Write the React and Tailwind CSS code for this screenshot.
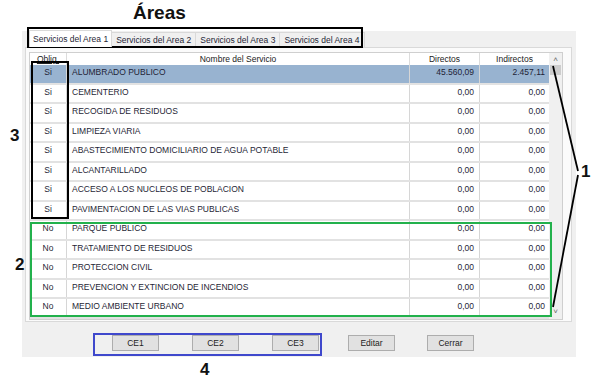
import React from "react";

const ROWS = [
  { ob: "Si", name: "ALUMBRADO PUBLICO", d: "45.560,09", i: "2.457,11", sel: true },
  { ob: "Si", name: "CEMENTERIO", d: "0,00", i: "0,00" },
  { ob: "Si", name: "RECOGIDA DE RESIDUOS", d: "0,00", i: "0,00" },
  { ob: "Si", name: "LIMPIEZA VIARIA", d: "0,00", i: "0,00" },
  { ob: "Si", name: "ABASTECIMIENTO DOMICILIARIO DE AGUA POTABLE", d: "0,00", i: "0,00" },
  { ob: "Si", name: "ALCANTARILLADO", d: "0,00", i: "0,00" },
  { ob: "Si", name: "ACCESO A LOS NUCLEOS DE POBLACION", d: "0,00", i: "0,00" },
  { ob: "Si", name: "PAVIMENTACION DE LAS VIAS PUBLICAS", d: "0,00", i: "0,00" },
  { ob: "No", name: "PARQUE PUBLICO", d: "0,00", i: "0,00" },
  { ob: "No", name: "TRATAMIENTO DE RESIDUOS", d: "0,00", i: "0,00" },
  { ob: "No", name: "PROTECCION CIVIL", d: "0,00", i: "0,00" },
  { ob: "No", name: "PREVENCION Y EXTINCION DE INCENDIOS", d: "0,00", i: "0,00" },
  { ob: "No", name: "MEDIO AMBIENTE URBANO", d: "0,00", i: "0,00" },
];

const TABS = ["Servicios del Area 1", "Servicios del Area 2", "Servicios del Area 3", "Servicios del Area 4"];

const Btn = ({ children }) => (
  <div className="w-[47px] h-[16px] flex items-center justify-center bg-[#e1e1e1] border border-[#adadad] text-[8.5px] text-[#222]">
    {children}
  </div>
);

export default function App() {
  return (
    <div className="relative w-[594px] h-[382px] bg-white overflow-hidden text-[#1f1f36]" style={{ fontFamily: "'Liberation Sans', Arial, sans-serif" }}>
      <div className="h-[31px] pl-[133px] pt-[1px] text-[19px] font-bold text-[#111] leading-[24px]">Áreas</div>

      <div className="ml-[22px] w-[554px] h-[326px] bg-[#f0f0f0] flex flex-col">
        {/* tabs */}
        <div className="flex pl-[7px] h-[16px] items-end">
          {TABS.map((t, k) => (
            <div
              key={t}
              className={
                k === 0
                  ? "h-[17px] -mt-[1px] px-[3px] flex items-center bg-white border border-b-0 border-[#d9d9d9] text-[8.5px] z-10"
                  : "h-[15px] px-[4px] flex items-center bg-[#f0f0f0] border-r border-t border-[#d9d9d9] text-[8.5px]"
              }
            >
              {t}
            </div>
          ))}
        </div>

        {/* tab page */}
        <div className="ml-[3px] w-[547px] h-[275px] shrink-0 bg-[#fbfbfb] border border-[#d9d9d9] pl-[3px] pt-[4px]">
          <div className="w-[534px] h-[268px] bg-white border border-[#cfcfcf] flex">
            <div className="flex-1 flex flex-col text-[8.5px]">
              <div className="h-[12px] flex text-[#222] leading-[12px]">
                <div className="w-[37px] text-center border-r border-[#dcdcdc] underline">Oblig.</div>
                <div className="w-[343px] text-center border-r border-[#dcdcdc]">Nombre del Servicio</div>
                <div className="w-[70px] text-center border-r border-[#dcdcdc]">Directos</div>
                <div className="flex-1 text-center">Indirectos</div>
              </div>
              {ROWS.map((r) => (
                <div key={r.name} className={`h-[19.5px] flex border-b-2 border-[#e2e2e2] ${r.sel ? "bg-[#98b3d0]" : ""}`}>
                  <div className="w-[37px] text-center border-r border-[#d6d6d6] pt-[1px]">{r.ob}</div>
                  <div className="w-[343px] pl-[5px] border-r border-[#d6d6d6] pt-[1px]">{r.name}</div>
                  <div className="w-[70px] text-right pr-[5px] border-r border-[#d6d6d6] pt-[1px]">{r.d}</div>
                  <div className="flex-1 text-right pr-[4px] pt-[1px]">{r.i}</div>
                </div>
              ))}
            </div>
            {/* scrollbar */}
            <div className="w-[13px] bg-[#f0f0f0] flex flex-col items-center">
              <div className="h-[12px] text-[8px] text-[#666] leading-[14px]">˄</div>
              <div className="w-[11px] h-[10px] bg-[#cdcdcd]" />
              <div className="flex-1" />
              <div className="h-[12px] text-[8px] text-[#666] leading-[10px]">˅</div>
            </div>
          </div>
        </div>

        {/* buttons */}
        <div className="flex items-start pt-[13px] flex-1 pl-[90px]">
          <Btn>CE1</Btn>
          <div className="w-[33px]" />
          <Btn>CE2</Btn>
          <div className="w-[33px]" />
          <Btn>CE3</Btn>
          <div className="w-[29px]" />
          <Btn>Editar</Btn>
          <div className="w-[32px]" />
          <Btn>Cerrar</Btn>
        </div>
      </div>

      {/* annotation overlays */}
      <div className="absolute left-[27px] top-[27px] w-[336px] h-[21px] border-2 border-black" />
      <div className="absolute left-[31px] top-[61px] w-[38px] h-[158px] border-2 border-black" />
      <div className="absolute left-[30px] top-[222px] w-[522px] h-[95px] border-2 border-[#22b14c]" />
      <div className="absolute left-[93px] top-[333px] w-[229px] h-[23px] border-2 border-[#3f48cc]" />
      <svg className="absolute left-0 top-0" width="594" height="382">
        <line x1="553" y1="66" x2="578" y2="171" stroke="#000" strokeWidth="1.8" />
        <line x1="553" y1="307" x2="578" y2="175" stroke="#000" strokeWidth="1.8" />
      </svg>
      <div className="absolute left-[581px] top-[163px] text-[17px] font-bold text-[#111] leading-[18px]">1</div>
      <div className="absolute left-[15px] top-[256px] text-[17px] font-bold text-[#111] leading-[18px]">2</div>
      <div className="absolute left-[10px] top-[127px] text-[17px] font-bold text-[#111] leading-[18px]">3</div>
      <div className="absolute left-[200px] top-[361px] text-[17px] font-bold text-[#111] leading-[18px]">4</div>
    </div>
  );
}
